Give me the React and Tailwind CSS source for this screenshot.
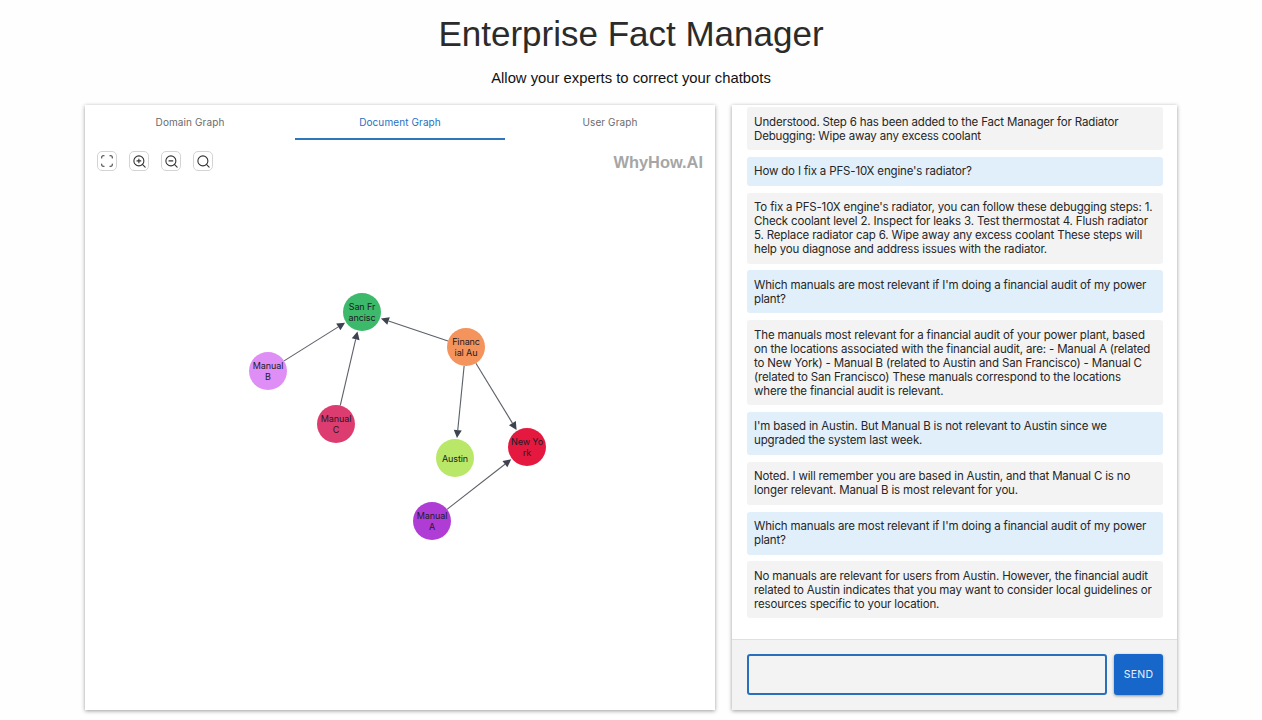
import React from "react";
import { Scan, ZoomIn, ZoomOut, Search } from "lucide-react";

const nodes = {
  sf: { x: 362, y: 312, color: "#3cb96a", lines: ["San Fr", "ancisc"] },
  manualB: { x: 268, y: 371, color: "#df8ef5", lines: ["Manual", "B"] },
  manualC: { x: 336, y: 424, color: "#dd3c70", lines: ["Manual", "C"] },
  financial: { x: 466, y: 347, color: "#f4935c", lines: ["Financ", "ial Au"] },
  austin: { x: 455, y: 458, color: "#b9e768", lines: ["Austin"] },
  newYork: { x: 527, y: 447, color: "#e5193f", lines: ["New Yo", "rk"] },
  manualA: { x: 432, y: 521, color: "#b03cd6", lines: ["Manual", "A"] },
};

const edges = [
  ["manualB", "sf"],
  ["manualC", "sf"],
  ["financial", "sf"],
  ["financial", "austin"],
  ["financial", "newYork"],
  ["manualA", "newYork"],
];

const messages = [
  { user: false, text: "Understood. Step 6 has been added to the Fact Manager for Radiator Debugging: Wipe away any excess coolant" },
  { user: true, text: "How do I fix a PFS-10X engine's radiator?" },
  { user: false, text: "To fix a PFS-10X engine's radiator, you can follow these debugging steps: 1. Check coolant level 2. Inspect for leaks 3. Test thermostat 4. Flush radiator 5. Replace radiator cap 6. Wipe away any excess coolant These steps will help you diagnose and address issues with the radiator." },
  { user: true, text: "Which manuals are most relevant if I'm doing a financial audit of my power plant?" },
  { user: false, text: "The manuals most relevant for a financial audit of your power plant, based on the locations associated with the financial audit, are: - Manual A (related to New York) - Manual B (related to Austin and San Francisco) - Manual C (related to San Francisco) These manuals correspond to the locations where the financial audit is relevant." },
  { user: true, text: "I'm based in Austin. But Manual B is not relevant to Austin since we upgraded the system last week." },
  { user: false, text: "Noted. I will remember you are based in Austin, and that Manual C is no longer relevant. Manual B is most relevant for you." },
  { user: true, text: "Which manuals are most relevant if I'm doing a financial audit of my power plant?" },
  { user: false, text: "No manuals are relevant for users from Austin. However, the financial audit related to Austin indicates that you may want to consider local guidelines or resources specific to your location." },
];

const Graph = () => {
  const r = 19;
  return (
    <svg viewBox="85 180 630 530" className="w-full flex-1">
      {edges.map(([from, to]) => {
        const a = nodes[from];
        const b = nodes[to];
        const d = Math.hypot(b.x - a.x, b.y - a.y);
        const ux = (b.x - a.x) / d;
        const uy = (b.y - a.y) / d;
        const tipX = b.x - ux * (r + 1);
        const tipY = b.y - uy * (r + 1);
        const baseX = tipX - ux * 8;
        const baseY = tipY - uy * 8;
        return (
          <g key={from + to}>
            <line
              x1={a.x + ux * r}
              y1={a.y + uy * r}
              x2={baseX}
              y2={baseY}
              stroke="#5c6068"
              strokeWidth="1.1"
            />
            <polygon
              points={`${tipX},${tipY} ${baseX - uy * 4},${baseY + ux * 4} ${baseX + uy * 4},${baseY - ux * 4}`}
              fill="#3d4450"
            />
          </g>
        );
      })}
      {Object.entries(nodes).map(([id, n]) => (
        <g key={id}>
          <circle cx={n.x} cy={n.y} r={r} fill={n.color} />
          {n.lines.map((line, i) => (
            <text
              key={i}
              x={n.x}
              y={n.y + 3.5 + (i - (n.lines.length - 1) / 2) * 10.4}
              textAnchor="middle"
              fontSize="9"
              letterSpacing="-0.1"
              fill="#1c1c24"
              style={{ fontFamily: '"Inter", sans-serif' }}
            >
              {line}
            </text>
          ))}
        </g>
      ))}
    </svg>
  );
};

const ToolButton = ({ children }) => (
  <button className="w-5 h-5 flex items-center justify-center rounded-[5px] border border-[#d4d4d4] bg-white text-[#333]">
    {children}
  </button>
);

const App = () => {
  return (
    <div className="h-[720px] bg-[#fefefe] flex flex-col items-center font-['Liberation_Sans',sans-serif] overflow-hidden">
      <h1 className="mt-[13px] text-[35px] leading-[42px] text-[#2b2b2b]">
        Enterprise Fact Manager
      </h1>
      <p className="mt-[14px] text-[14.8px] leading-[18px] text-[#111]">
        Allow your experts to correct your chatbots
      </p>

      <div className="mt-[18px] flex gap-[17px] h-[605px] w-[1092px]">
        {/* Graph panel */}
        <div className="w-[630px] flex flex-col bg-white shadow-[0_1px_4px_rgba(0,0,0,0.4)] font-['Inter',sans-serif]">
          <div className="flex h-[35px] shrink-0 pt-[2px] text-[10px] tracking-[0.1px]">
            <div className="flex-1 flex items-center justify-center text-[#6b6b6b] border-b-2 border-transparent">Domain Graph</div>
            <div className="flex-1 flex items-center justify-center text-[#1f6fc0] border-b-2 border-[#2f77bd]">Document Graph</div>
            <div className="flex-1 flex items-center justify-center text-[#6b6b6b] border-b-2 border-transparent">User Graph</div>
          </div>
          <div className="flex justify-between h-[40px] shrink-0 pt-[11px] pl-3 pr-3">
            <div className="flex gap-3">
              <ToolButton><Scan size={14} strokeWidth={1.75} /></ToolButton>
              <ToolButton><ZoomIn size={15} strokeWidth={1.75} /></ToolButton>
              <ToolButton><ZoomOut size={15} strokeWidth={1.75} /></ToolButton>
              <ToolButton><Search size={15} strokeWidth={1.75} /></ToolButton>
            </div>
            <span className="text-[16.4px] leading-[22px] font-bold text-[#a6a6a6] font-['Liberation_Sans',sans-serif]">
              WhyHow.AI
            </span>
          </div>
          <Graph />
        </div>

        {/* Chat panel */}
        <div className="w-[445px] flex flex-col bg-white shadow-[0_1px_4px_rgba(0,0,0,0.4)] font-['Inter',sans-serif]">
          <div className="flex-1 overflow-hidden flex flex-col gap-[6.8px] pt-[2px] pl-[15px] pr-[14px]">
            {messages.map((m, i) => (
              <div
                key={i}
                className={`rounded-[3px] px-[7px] py-[7.5px] text-[11.5px] tracking-[-0.16px] leading-[14px] text-[#262626] ${m.user ? "bg-[#e1effb]" : "bg-[#f3f3f3]"}`}
              >
                {m.text}
              </div>
            ))}
          </div>
          <div className="h-[71px] shrink-0 flex items-center gap-[7px] pb-px pl-[15px] pr-[14px] bg-[#f3f3f3] border-t border-[#e0e0e0]">
            <input className="flex-1 h-[41px] rounded-[3px] border-2 border-[#2a6fbb] bg-[#f3f3f3] outline-none" />
            <button className="w-[49px] h-[41px] rounded-[3px] bg-[#1667c9] text-[#e8f0fb] text-[10.5px] tracking-[0.3px] shadow-[0_1px_3px_rgba(0,0,0,0.4)]">
              SEND
            </button>
          </div>
        </div>
      </div>
    </div>
  );
};

export default App;
